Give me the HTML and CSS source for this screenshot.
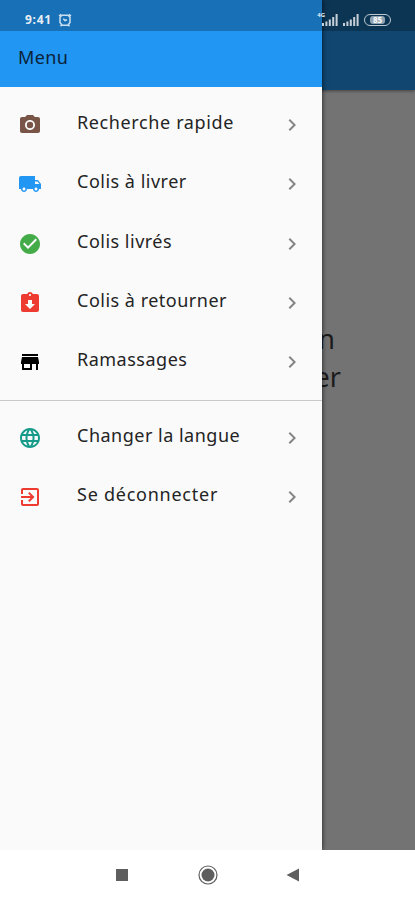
FILE: index.html
```html
<!DOCTYPE html>
<html lang="fr">
<head>
<meta charset="utf-8">
<meta name="viewport" content="width=device-width, initial-scale=1">
<title>Menu</title>
<link rel="stylesheet" href="styles.css">
</head>
<body>
<div class="phone">
  <div class="screen">
    <main class="page">
      <div class="page-bar"></div>
      <div class="page-text"><span class="line">n</span><span class="line line-last">er</span></div>
    </main>
    <aside class="drawer">
      <header class="drawer-header">Menu</header>
      <nav class="menu">
        <a class="item"><svg class="icon brown" viewBox="0 0 24 24"><circle cx="12" cy="12" r="3.2"/><path d="M9 2 7.17 4H4c-1.1 0-2 .9-2 2v12c0 1.1.9 2 2 2h16c1.1 0 2-.9 2-2V6c0-1.100-.9-2-2-2h-3.170L15 2H9zm3 15c-2.760 0-5-2.240-5-5s2.240-5 5-5 5 2.240 5 5-2.240 5-5 5z"/></svg><span class="label wide">Recherche rapide</span><svg class="chevron" viewBox="0 0 24 24"><path d="M10 6 8.590 7.410 13.170 12l-4.580 4.590L10 18l6-6z"/></svg></a>
        <a class="item"><svg class="icon blue" viewBox="0 0 24 24"><path d="M20 8h-3V4H3c-1.100 0-2 .9-2 2v11h2c0 1.660 1.340 3 3 3s3-1.340 3-3h6c0 1.660 1.340 3 3 3s3-1.340 3-3h2v-5l-3-4zM6 18.500c-.83 0-1.500-.67-1.500-1.500s.67-1.500 1.500-1.500 1.500.67 1.500 1.500-.67 1.500-1.500 1.500zm13.500-9 1.960 2.500H17V9.500h2.500zm-1.500 9c-.83 0-1.500-.67-1.500-1.500s.67-1.500 1.500-1.500 1.500.67 1.500 1.500-.67 1.500-1.500 1.500z"/></svg><span class="label">Colis à livrer</span><svg class="chevron" viewBox="0 0 24 24"><path d="M10 6 8.590 7.410 13.170 12l-4.580 4.590L10 18l6-6z"/></svg></a>
        <a class="item"><svg class="icon green" viewBox="0 0 24 24"><path d="M12 2C6.480 2 2 6.480 2 12s4.480 10 10 10 10-4.480 10-10S17.520 2 12 2zm-2 15-5-5 1.410-1.410L10 14.170l7.590-7.590L19 8l-9 9z"/></svg><span class="label">Colis livrés</span><svg class="chevron" viewBox="0 0 24 24"><path d="M10 6 8.590 7.410 13.170 12l-4.580 4.590L10 18l6-6z"/></svg></a>
        <a class="item"><svg class="icon red" viewBox="0 0 24 24"><path d="M19 3h-4.180C14.400 1.840 13.300 1 12 1s-2.400.84-2.820 2H5c-1.100 0-2 .9-2 2v14c0 1.100.9 2 2 2h14c1.100 0 2-.9 2-2V5c0-1.100-.9-2-2-2zm-7 0c.55 0 1 .45 1 1s-.45 1-1 1-1-.45-1-1 .45-1 1-1zm0 15-5-5h3V9h4v4h3l-5 5z"/></svg><span class="label">Colis à retourner</span><svg class="chevron" viewBox="0 0 24 24"><path d="M10 6 8.590 7.410 13.170 12l-4.580 4.590L10 18l6-6z"/></svg></a>
        <a class="item"><svg class="icon black" viewBox="0 0 24 24"><path d="M20 4H4v2h16V4zm1 10v-2l-1-5H4l-1 5v2h1v6h10v-6h4v6h2v-6h1zm-9 4H6v-4h6v4z"/></svg><span class="label">Ramassages</span><svg class="chevron" viewBox="0 0 24 24"><path d="M10 6 8.590 7.410 13.170 12l-4.580 4.590L10 18l6-6z"/></svg></a>
        <hr class="divider">
        <a class="item"><svg class="icon teal" viewBox="0 0 24 24"><path d="M11.990 2C6.470 2 2 6.480 2 12s4.470 10 9.990 10C17.520 22 22 17.520 22 12S17.520 2 11.990 2zm6.930 6h-2.950c-.32-1.250-.78-2.450-1.380-3.560 1.840.63 3.370 1.910 4.330 3.560zM12 4.040c.83 1.200 1.480 2.530 1.910 3.960h-3.820c.43-1.430 1.080-2.760 1.910-3.960zM4.260 14C4.100 13.360 4 12.690 4 12s.1-1.360.26-2h3.380c-.08.66-.14 1.320-.14 2s.06 1.340.14 2H4.260zm.82 2h2.950c.32 1.250.78 2.450 1.380 3.560-1.840-.63-3.370-1.900-4.330-3.560zm2.950-8H5.080c.96-1.660 2.490-2.930 4.330-3.560C8.810 5.550 8.350 6.750 8.030 8zM12 19.960c-.83-1.200-1.480-2.530-1.910-3.960h3.820c-.43 1.430-1.080 2.760-1.910 3.960zM14.340 14H9.660c-.09-.66-.16-1.320-.16-2s.07-1.350.16-2h4.680c.09.65.16 1.320.16 2s-.07 1.340-.16 2zm.25 5.560c.6-1.110 1.060-2.310 1.380-3.560h2.950c-.96 1.650-2.490 2.930-4.330 3.560zM16.360 14c.08-.66.14-1.320.14-2s-.06-1.340-.14-2h3.380c.16.64.26 1.310.26 2s-.1 1.360-.26 2h-3.380z"/></svg><span class="label">Changer la langue</span><svg class="chevron" viewBox="0 0 24 24"><path d="M10 6 8.590 7.410 13.170 12l-4.580 4.590L10 18l6-6z"/></svg></a>
        <a class="item"><svg class="icon red" viewBox="0 0 24 24"><path d="M10.090 15.590 11.500 17l5-5-5-5-1.410 1.410L12.670 11H3v2h9.670l-2.580 2.590zM19 3H5c-1.110 0-2 .9-2 2v4h2V5h14v14H5v-4H3v4c0 1.100.89 2 2 2h14c1.100 0 2-.9 2-2V5c0-1.100-.9-2-2-2z"/></svg><span class="label widest">Se déconnecter</span><svg class="chevron" viewBox="0 0 24 24"><path d="M10 6 8.590 7.410 13.170 12l-4.580 4.590L10 18l6-6z"/></svg></a>
      </nav>
    </aside>
    <div class="status">
      <span class="time">9:41</span>
      <svg class="alarm" viewBox="0 0 14 14"><path d="M4 2.200h6l2 2v5.300l-2.200 2.800H4.200L2 9.500V4.200zM1 3l2-1.800M13 3l-2-1.800M3.500 12l-1 1.200M10.500 12l1 1.200M5.300 5.800 7 7.500l2-.8"/></svg>
      <span class="net">4G</span>
      <svg class="signal" viewBox="0 0 16 12"><path d="M0 9h2v3H0zM3.400 7.500h2V12h-2zM6.800 5.500h2V12h-2zM10.200 3h2v9h-2zM13.600 0h2v12h-2z"/></svg>
      <svg class="signal second" viewBox="0 0 16 12"><path d="M0 9h2v3H0zM3.400 7.500h2V12h-2zM6.800 5.500h2V12h-2zM10.200 3h2v9h-2zM13.600 0h2v12h-2z"/></svg>
      <span class="battery"><span class="level">85</span></span>
    </div>
  </div>
  <footer class="navbar">
    <svg class="nav-icon" viewBox="0 0 24 24"><path d="M6 6h12v12H6z"/></svg>
    <svg class="nav-icon" viewBox="0 0 24 24"><circle cx="12" cy="12" r="6.500"/><circle class="ring" cx="12" cy="12" r="9"/></svg>
    <svg class="nav-icon" viewBox="0 0 24 24"><path d="M17 5.500v13L4.500 12z"/></svg>
  </footer>
</div>
</body>
</html>
```
FILE: styles.css
```css
* { box-sizing: border-box; }
body { margin: 0; font-family: "Noto Sans", sans-serif; }
.phone { width: 415px; height: 900px; display: flex; flex-direction: column; overflow: hidden; }
.screen { position: relative; height: 850px; overflow: hidden; }
.page { height: 100%; background: #737373; }
.page-bar { height: 90px; background: #10466f; box-shadow: 0 1px 3px rgba(0, 0, 0, .45); }
.page-text { display: flex; flex-direction: column; align-items: flex-end; padding: 230px 80px 0 0; font-size: 27px; line-height: 38px; color: #1b1b1b; }
.line-last { margin-right: -6px; }
.drawer { position: absolute; inset: 0 auto 0 0; width: 322px; background: #fafafa; box-shadow: 0 0 5px rgba(0, 0, 0, .75); }
.drawer-header { height: 87px; padding: 44px 18px 0; background: #2196f3; color: #0b2238; font-size: 18px; line-height: 27px; letter-spacing: .4px; }
.menu { padding-top: 8.500px; }
.item { display: flex; align-items: center; height: 59.300px; padding: 0 18px; }
.icon { width: 24px; height: 24px; flex: none; }
.label { flex: 1; margin: -6.200px 0 0 35px; font-size: 18px; line-height: 26px; letter-spacing: .5px; color: #242424; white-space: nowrap; }
.wide { letter-spacing: .62px; }
.widest { letter-spacing: .75px; }
.chevron { width: 24px; height: 24px; fill: #858585; }
.brown { fill: #795548; }
.blue { fill: #2196f3; }
.green { fill: #43ab47; }
.red { fill: #ed3b32; }
.black { fill: #000; }
.teal { fill: #169b8b; }
.divider { height: 1px; margin: 8px 0 7.200px; border: 0; background: #c9c9c9; }
.status { position: absolute; inset: 0 0 auto 0; height: 31px; display: flex; align-items: center; padding: 8px 24px 0 25px; background: rgba(0, 0, 0, .25); color: #e6eef5; }
.time { font-size: 12px; font-weight: 700; line-height: 16px; letter-spacing: .7px; }
.alarm { width: 14px; height: 14px; margin-left: 6px; fill: none; stroke: #c9dff0; stroke-width: 1.500; }
.net { align-self: flex-start; margin: 4px -3px 0 auto; font-size: 6px; font-weight: 700; line-height: 7px; }
.signal { width: 16px; height: 12px; fill: #c8d1d8; }
.second { margin-left: 5px; }
.battery { display: flex; align-items: center; justify-content: center; width: 27px; height: 12px; margin-left: 5px; border: 1.500px solid #bac8d2; border-radius: 6px; }
.level { width: 15px; border-radius: 3px; background: #8fa3b2; color: #fff; font-size: 8px; font-weight: 700; line-height: 8px; text-align: center; }
.navbar { height: 50px; display: flex; justify-content: center; align-items: center; gap: 62px; background: #fff; }
.nav-icon { width: 24px; height: 24px; fill: #5e5e5e; }
.ring { fill: none; stroke: #5e5e5e; stroke-width: 1.200; }
```
